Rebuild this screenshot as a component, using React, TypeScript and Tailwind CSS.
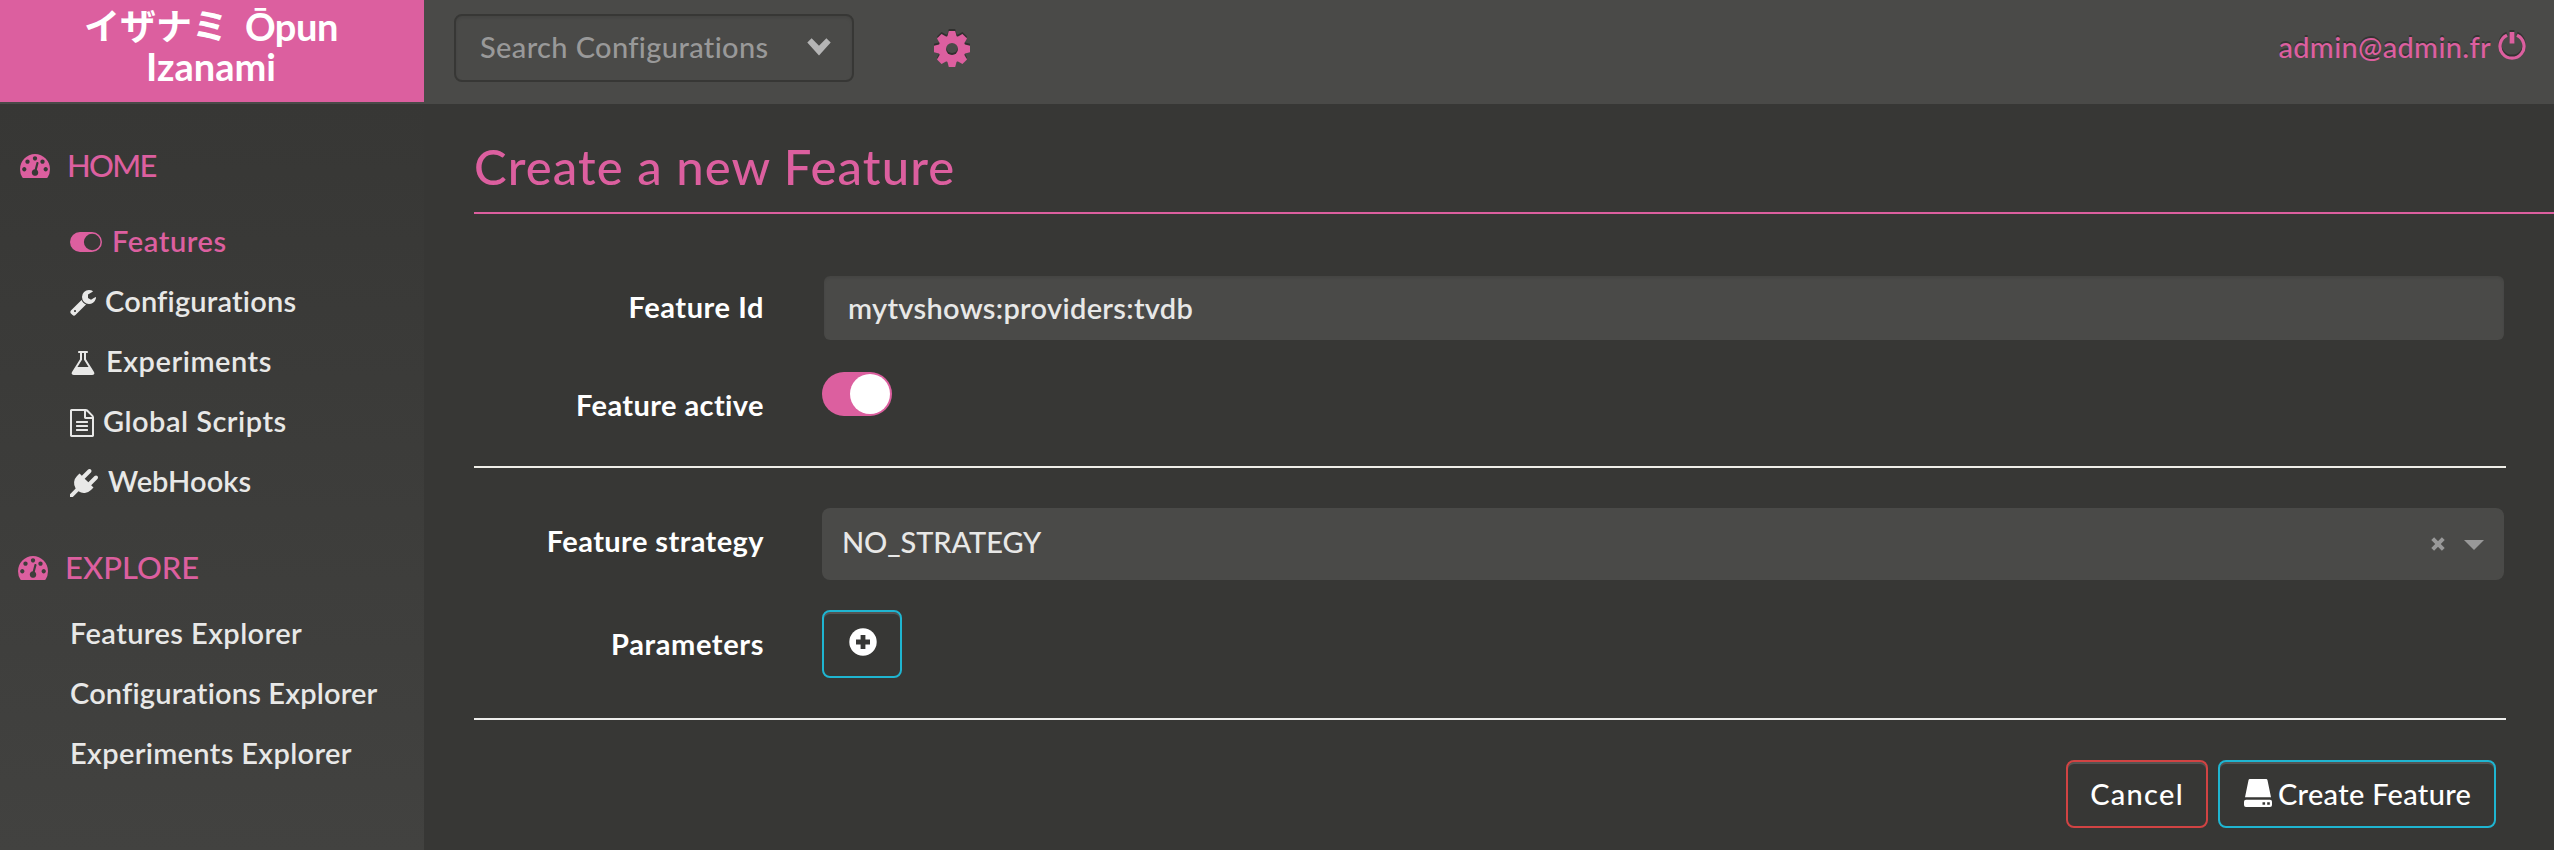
import type { ReactNode } from "react";

type IconProps = { className?: string };

const TachometerIcon = ({ className }: IconProps) => (
  <svg viewBox="0 256 1792 1408" preserveAspectRatio="none" className={className} fill="currentColor">
    <path d="M384 1152q0-53-37.500-90.500t-90.500-37.500-90.500 37.500-37.500 90.500 37.500 90.500 90.500 37.500 90.500-37.500 37.500-90.500zm192-448q0-53-37.500-90.500t-90.500-37.500-90.500 37.500-37.500 90.500 37.500 90.500 90.500 37.500 90.500-37.500 37.500-90.500zm428 481l101-382q6-26-7.500-48.500t-38.500-29.500-48 6.500-30 39.500l-101 382q-60 5-107 43.500t-63 98.500q-20 77 20 146t117 89 146-20 89-117q16-60-6-117t-72-91zm660-33q0-53-37.500-90.500t-90.500-37.500-90.500 37.500-37.500 90.500 37.500 90.500 90.500 37.500 90.500-37.500 37.500-90.500zm-640-640q0-53-37.500-90.500t-90.500-37.500-90.500 37.500-37.500 90.500 37.500 90.500 90.500 37.500 90.500-37.500 37.500-90.500zm448 192q0-53-37.500-90.500t-90.500-37.500-90.500 37.500-37.500 90.500 37.500 90.500 90.500 37.500 90.500-37.500 37.500-90.500zm320 448q0 261-141 483-19 29-54 29h-1402q-35 0-54-29-141-221-141-483 0-182 71-348t191-286 286-191 348-71 348 71 286 191 191 286 71 348z" />
  </svg>
);

const ToggleOnIcon = ({ className }: IconProps) => (
  <svg viewBox="0 0 32 20" className={className} fill="currentColor">
    <path fillRule="evenodd" d="M10 0h12a10 10 0 0 1 0 20H10a10 10 0 0 1 0-20zm12.200 1.700a8.300 8.300 0 1 0 0 16.600 8.300 8.300 0 0 0 0-16.600z" />
  </svg>
);

const WrenchIcon = ({ className }: IconProps) => (
  <svg viewBox="64 128 1664 1664" className={className} fill="currentColor">
    <path d="M448 1472q0-26-19-45t-45-19-45 19-19 45 19 45 45 19 45-19 19-45zm644-420l-682 682q-37 37-90 37-52 0-91-37l-106-108q-38-36-38-90 0-53 38-91l681-681q39 98 114.500 173.500t173.500 114.500zm634-435q0 39-23 106-47 134-164.500 217.500t-258.500 83.500q-185 0-316.500-131.500t-131.500-316.500 131.500-316.500 316.500-131.500q58 0 121.500 16.500t107.500 46.500q16 11 16 28t-16 28l-293 169v224l193 107q5-3 79-48.500t135.500-81 70.500-35.500q15 0 23.500 10t8.500 25z" />
  </svg>
);

const FlaskIcon = ({ className }: IconProps) => (
  <svg viewBox="128 128 1536 1536" preserveAspectRatio="none" className={className} fill="currentColor">
    <path d="M1591 1448q56 89 21.500 152.500t-140.500 63.500h-1152q-106 0-140.500-63.500t21.500-152.500l503-793v-399h-64q-26 0-45-19t-19-45 19-45 45-19h512q26 0 45 19t19 45-19 45-45 19h-64v399zm-779-725l-272 429h712l-272-429-20-31v-436h-128v436z" />
  </svg>
);

const FileTextIcon = ({ className }: IconProps) => (
  <svg viewBox="128 0 1536 1792" className={className} fill="currentColor">
    <path d="M1596 380q28 28 48 76t20 88v1152q0 40-28 68t-68 28h-1344q-40 0-68-28t-28-68v-1600q0-40 28-68t68-28h896q40 0 88 20t76 48zm-444-244v376h376q-10-29-22-41l-313-313q-12-12-41-22zm384 1528v-1024h-416q-40 0-68-28t-28-68v-416h-768v1536h1280zm-1024-864q0-14 9-23t23-9h704q14 0 23 9t9 23v64q0 14-9 23t-23 9h-704q-14 0-23-9t-9-23v-64zm736 224q14 0 23 9t9 23v64q0 14-9 23t-23 9h-704q-14 0-23-9t-9-23v-64q0-14 9-23t23-9h704zm0 256q14 0 23 9t9 23v64q0 14-9 23t-23 9h-704q-14 0-23-9t-9-23v-64q0-14 9-23t23-9h704z" />
  </svg>
);

const PlugIcon = ({ className }: IconProps) => (
  <svg viewBox="0 0 1792 1792" className={className} fill="currentColor">
    <path d="M1755 453q37 38 37 90.500t-37 90.500l-401 400 150 150-160 160q-163 163-389.500 186.500t-411.500-100.500l-362 362h-181v-181l362-362q-124-185-100.500-411.500t186.500-389.500l160-160 150 150 400-401q38-37 91-37t90 37 37 90.500-37 90.500l-400 401 234 234 401-400q38-37 91-37t90 37z" />
  </svg>
);

const ChevronIcon = ({ className }: IconProps) => (
  <svg viewBox="0 0 26 20" className={className} fill="currentColor">
    <path d="M0 5 4.800 0.300 13 8.600 21.200 0.300 26 5 13 19.500z" />
  </svg>
);

const CogIcon = ({ className }: IconProps) => (
  <svg viewBox="0 0 36 36" className={className}>
    <mask id="cog-hole">
      <rect width="36" height="36" fill="#fff" />
      <circle cx="18" cy="18" r="6" fill="#000" />
    </mask>
    <g fill="currentColor" mask="url(#cog-hole)">
      <circle cx="18" cy="18" r="13.6" />
      <path id="cog-teeth" d="M14.800 0h6.400l1.600 6v24l-1.600 6h-6.400l-1.600-6V6z" />
      <use href="#cog-teeth" transform="rotate(45 18 18)" />
      <use href="#cog-teeth" transform="rotate(90 18 18)" />
      <use href="#cog-teeth" transform="rotate(135 18 18)" />
    </g>
  </svg>
);

const PowerIcon = ({ className }: IconProps) => (
  <svg viewBox="0 0 28 28" className={className} fill="none" stroke="currentColor">
    <path d="M9 3.300a12 12 0 1 0 10 0" strokeWidth="3.200" />
    <path d="M14 0v11.500" strokeWidth="4.800" strokeLinecap="butt" />
  </svg>
);

const PlusCircleIcon = ({ className }: IconProps) => (
  <svg viewBox="0 0 28 28" className={className}>
    <circle cx="14" cy="14" r="13.700" fill="#fff" />
    <path d="M14 7v14M7 14h14" stroke="#373735" strokeWidth="4.800" />
  </svg>
);

const HddIcon = ({ className }: IconProps) => (
  <svg viewBox="0 0 28 28" className={className} fill="currentColor">
    <path d="M6 0h16a1.500 1.500 0 0 1 1.500 1.200L27 18.300H1L4.500 1.200A1.500 1.500 0 0 1 6 0z" />
    <path fillRule="evenodd" d="M2 20.800h24a2 2 0 0 1 2 2v3.200a2 2 0 0 1-2 2H2a2 2 0 0 1-2-2v-3.200a2 2 0 0 1 2-2zm16.500 2.500v2.400h2.600v-2.400zm4.700 0v2.400h2.600v-2.400z" />
  </svg>
);

const ClearIcon = ({ className }: IconProps) => (
  <svg viewBox="0 0 14 14" className={className} stroke="currentColor" strokeWidth="4">
    <path d="M1.700 1.700l10.600 10.600M12.300 1.700L1.700 12.300" />
  </svg>
);

function NavItem({ icon, text, label, active }: { icon?: ReactNode; text: string; label: string; active?: boolean }) {
  return (
    <li className={`flex h-[60px] items-center pl-[70px] font-semibold ${active ? "text-[#dc5f9f]" : "text-[#e8e8e7]"}`}>
      {icon}
      <span className={text}>{label}</span>
    </li>
  );
}

function Field({ label, labelClass, className, children }: { label: string; labelClass: string; className: string; children: ReactNode }) {
  return (
    <div className={`flex ${className}`}>
      <label className={`w-[290px] shrink-0 text-right leading-[34px] font-bold text-white ${labelClass}`}>{label}</label>
      {children}
    </div>
  );
}

export default function App() {
  return (
    <div className="flex h-[850px] w-[2554px] flex-col overflow-hidden bg-[#373735] font-['Lato','Noto_Sans_CJK_JP',sans-serif] text-[29px] leading-[34px] whitespace-nowrap">
      <header className="flex h-[104px] shrink-0 bg-[#4a4a48]">
        <div className="flex h-[102px] w-[424px] flex-col items-center bg-[#dc5f9f] pt-[6px] pr-[2px] text-[38px] leading-[40px] font-bold text-white">
          <div className="flex h-10 items-center">
            <span className="text-[36px]">イザナミ</span>
            <span className="ml-[17px] tracking-[-0.4px]">Ōpun</span>
          </div>
          <div className="h-10">Izanami</div>
        </div>
        <div className="mt-[14px] ml-[30px] flex h-[68px] w-[400px] items-center justify-between rounded-lg border-2 border-[#373735] pr-5 pb-[2px] pl-6 text-[#999] shadow-[inset_0_2px_3px_rgba(0,0,0,0.08)]">
          <span className="font-medium tracking-[0.37px]">Search Configurations</span>
          <ChevronIcon className="h-[18px] w-[26px] text-[#b5b5b5]" />
        </div>
        <CogIcon className="mt-[31px] ml-[80px] size-9 text-[#dc5f9f] drop-shadow-[0_-2px_0_rgba(0,0,0,0.35)]" />
        <div className="mt-[30px] mr-[28px] ml-auto flex text-[#dc5f9f]">
          <span className="font-medium tracking-[0.32px] [text-shadow:0_-2px_0_rgba(0,0,0,0.3)]">admin@admin.fr</span>
          <PowerIcon className="mt-[2px] ml-[7px] size-7 drop-shadow-[0_-2px_0_rgba(0,0,0,0.3)]" />
        </div>
      </header>

      <div className="flex min-h-0 flex-1">
        <nav className="w-[424px] shrink-0 bg-linear-to-b from-[#373735] to-[#424240]">
          <div className="mt-[43px] flex h-9 items-center pl-5 text-[31px] font-medium text-[#dc5f9f]">
            <TachometerIcon className="mt-[2px] h-6 w-[30px]" />
            <span className="ml-[17px] tracking-[-1.7px]">HOME</span>
          </div>
          <ul className="mt-[28px]">
            <NavItem active icon={<ToggleOnIcon className="mt-[2px] h-5 w-8" />} text="ml-[10px] tracking-[0.61px]" label="Features" />
            <NavItem icon={<WrenchIcon className="mt-1 size-[26px]" />} text="ml-[9px] tracking-[0.19px]" label="Configurations" />
            <NavItem icon={<FlaskIcon className="ml-[1px] mt-1 h-6 w-6" />} text="ml-[11px] tracking-[0.54px]" label="Experiments" />
            <NavItem icon={<FileTextIcon className="mt-1 h-7 w-6" />} text="ml-[9px] tracking-[0.49px]" label="Global Scripts" />
            <NavItem icon={<PlugIcon className="mt-1 size-7" />} text="ml-[10px] tracking-[0.08px]" label="WebHooks" />
          </ul>
          <div className="mt-[38px] flex h-9 items-center pl-[18px] text-[31px] font-medium text-[#dc5f9f]">
            <TachometerIcon className="mt-[2px] h-6 w-[30px]" />
            <span className="ml-[17px] tracking-[0px]">EXPLORE</span>
          </div>
          <ul className="mt-[18px]">
            <NavItem text="tracking-[0.42px]" label="Features Explorer" />
            <NavItem text="tracking-[0.17px]" label="Configurations Explorer" />
            <NavItem text="tracking-[0.34px]" label="Experiments Explorer" />
          </ul>
        </nav>

        <main className="flex min-w-0 flex-1 flex-col pl-[50px]">
          <h1 className="flex h-[110px] items-end border-b-2 border-[#dc5f9f] pb-[17px] text-[49px] leading-[58px] font-medium tracking-[1.1px] text-[#dc5f9f]">
            Create a new Feature
          </h1>
          <form className="flex w-[2032px] flex-col">
            <Field label="Feature Id" labelClass="pt-[14px] tracking-[0.57px]" className="mt-[62px] h-16">
              <div className="ml-[60px] flex w-[1680px] items-center rounded-md bg-[#4a4a48] pb-[1px] pl-6 font-semibold tracking-[0.3px] text-[#e8e8e7] shadow-[inset_0_2px_3px_rgba(0,0,0,0.08)]">
                mytvshows:providers:tvdb
              </div>
            </Field>
            <Field label="Feature active" labelClass="pt-[16px] tracking-[0.4px]" className="mt-8 h-11">
              <div className="ml-[58px] flex w-[70px] items-center justify-end rounded-full bg-[#dc5f9f] pr-[2px]">
                <div className="size-10 rounded-full bg-white" />
              </div>
            </Field>
            <div className="mt-[50px] h-[2px] bg-[#efeee8]" />
            <Field label="Feature strategy" labelClass="pt-[16px] tracking-[0.41px]" className="mt-10 h-[72px]">
              <div className="ml-[58px] flex w-[1682px] items-center rounded-lg bg-[#4a4a48] pr-5 pl-5 text-[#e8e8e7]">
                <span className="-mt-[5px] font-medium tracking-[-0.1px]">NO_STRATEGY</span>
                <ClearIcon className="ml-auto size-[14px] text-[#999]" />
                <svg viewBox="0 0 20 10" className="mt-[2px] ml-[19px] h-[10px] w-5 text-[#999]" fill="currentColor">
                  <path d="M0 0h20L10 10z" />
                </svg>
              </div>
            </Field>
            <Field label="Parameters" labelClass="pt-[17px] tracking-[0.61px]" className="mt-[30px] h-[68px]">
              <button type="button" className="ml-[58px] flex w-20 items-center justify-center rounded-lg border-2 border-[#1fb5d1] pb-1 pl-[2px] shadow-[inset_0_2px_0_rgba(255,255,255,0.15)]">
                <PlusCircleIcon className="size-7" />
              </button>
            </Field>
            <div className="mt-10 h-[2px] bg-[#eeeeec]" />
            <div className="mt-10 flex justify-end gap-[10px] pr-[10px] font-medium text-white">
              <button type="button" className="h-[68px] w-[142px] rounded-lg border-2 border-[#d14343] pb-[1px] tracking-[1.3px] shadow-[inset_0_2px_0_rgba(255,255,255,0.15)]">
                Cancel
              </button>
              <button type="button" className="flex h-[68px] w-[278px] items-center rounded-lg border-2 border-[#1fb5d1] pb-[1px] pl-6 shadow-[inset_0_2px_0_rgba(255,255,255,0.15)]">
                <HddIcon className="-mt-[2px] size-7" />
                <span className="ml-[6px] tracking-[0.3px]">Create Feature</span>
              </button>
            </div>
          </form>
        </main>
      </div>
    </div>
  );
}
